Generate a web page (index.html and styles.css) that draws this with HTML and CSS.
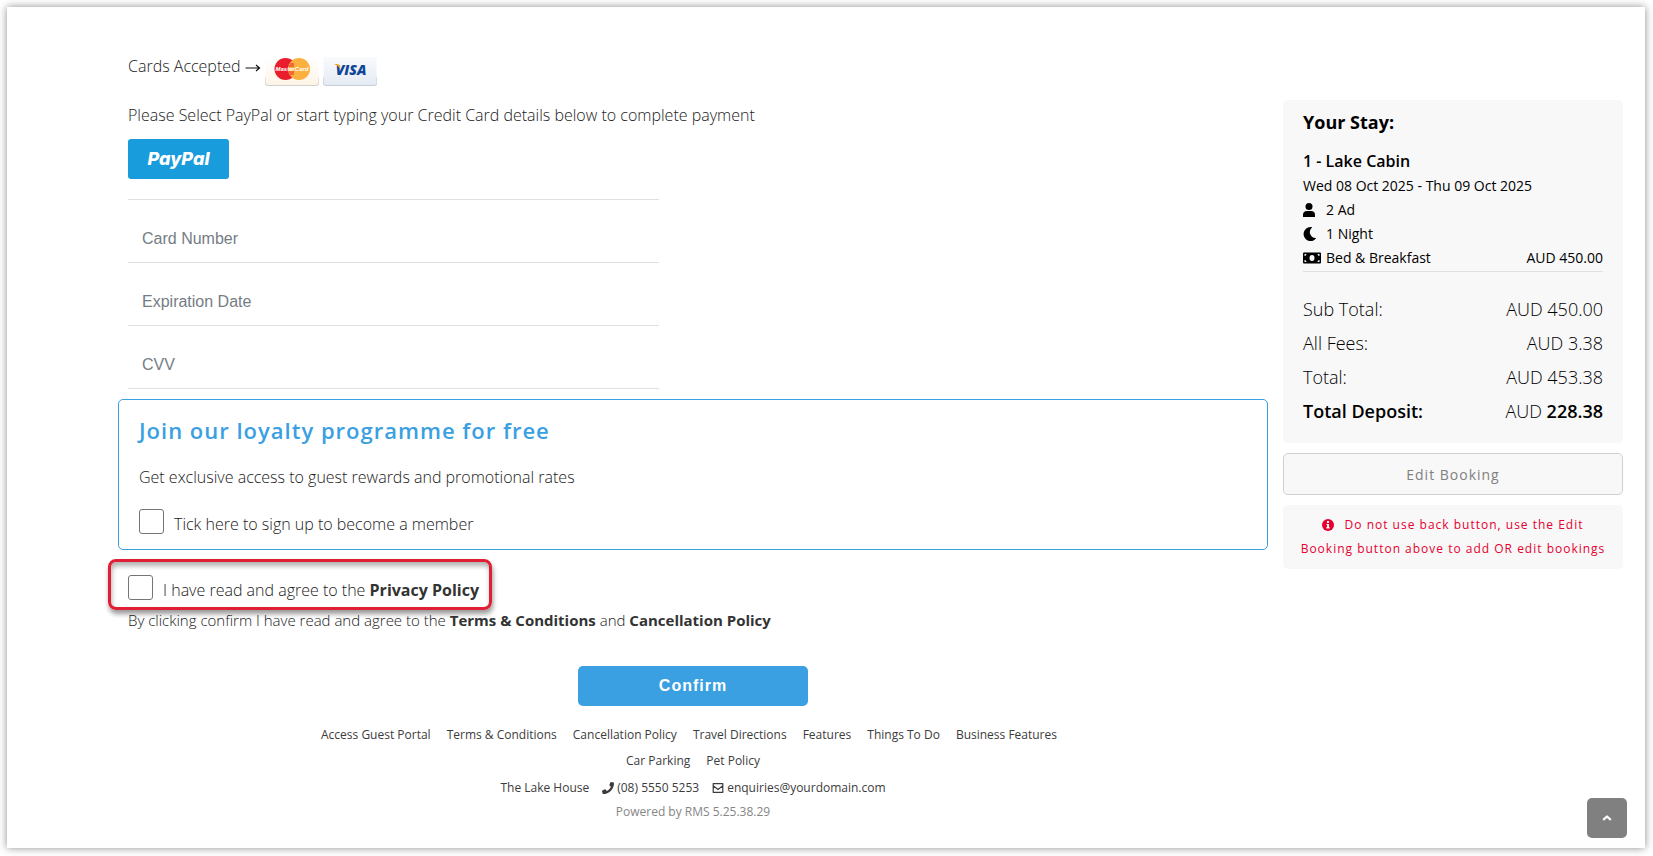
FILE: index.html
```html
<!DOCTYPE html>
<html lang="en">
<head>
    <meta charset="UTF-8">
    <meta name="viewport" content="width=device-width, initial-scale=1.0">
    <title>The Lake House - Payment</title>
    <link rel="stylesheet" href="styles.css">
</head>
<body>
    <div class="page">
        <main class="content">
            <form class="payment-form">
                <div class="cards-accepted">
                    <span>Cards Accepted</span>
                    <svg class="arrow" width="16" height="10" viewBox="0 0 16 10"><path d="M0.5 5H14.5M11 2L14.5 5L11 8" fill="none" stroke="#111" stroke-width="1.2"/></svg>
                    <svg class="card-logo" width="54" height="29" viewBox="0 0 54 29" role="img" aria-label="MasterCard">
                        <defs>
                            <linearGradient id="mc" x1="0" y1="0" x2="0" y2="1"><stop offset="0" stop-color="#fff"/><stop offset="1" stop-color="#fdf4e6"/></linearGradient>
                        </defs>
                        <path d="M0 20V26Q0 29 3 29H51Q54 29 54 26V20Z" fill="#d3d0cc"/>
                        <path d="M0.5 0H53.5V25Q53.5 28 51 28H3Q0.5 28 0.5 25Z" fill="url(#mc)"/>
                        <circle cx="20.500" cy="12" r="11" fill="#ea1d2c"/>
                        <circle cx="34" cy="12" r="11" fill="#fbb040"/>
                        <path d="M25 7H29M24 9H29M24 15H29M25 17H29" stroke="#ea1d2c"/>
                        <text class="mc-text" x="27" y="14" text-anchor="middle">MasterCard</text>
                    </svg>
                    <svg class="card-logo" width="54" height="29" viewBox="0 0 54 29" role="img" aria-label="Visa">
                        <defs>
                            <linearGradient id="visa" x1="0" y1="0" x2="0" y2="1"><stop offset="0" stop-color="#f9fafc"/><stop offset="1" stop-color="#e5ebf4"/></linearGradient>
                        </defs>
                        <path d="M0 20V26Q0 29 3 29H51Q54 29 54 26V20Z" fill="#c6ccd6"/>
                        <path d="M0.5 0H53.5V25Q53.5 28 51 28H3Q0.5 28 0.5 25Z" fill="url(#visa)"/>
                        <text class="visa-text" x="28" y="18" text-anchor="middle">VISA</text>
                        <path d="M11 7H15Q16 7 16.400 8.500L17.500 12Q15 8.500 11 7Z" fill="#f7a823"/>
                    </svg>
                </div>

                <p class="text">Please Select PayPal or start typing your Credit Card details below to complete payment</p>
                <button type="button" class="paypal-btn">PayPal</button>

                <div class="card-fields">
                    <input type="text" aria-label="Card Number" placeholder="Card Number">
                    <input type="text" aria-label="Expiration Date" placeholder="Expiration Date">
                    <input type="text" aria-label="CVV" placeholder="CVV">
                </div>

                <section class="loyalty">
                    <h2>Join our loyalty programme for free</h2>
                    <p class="text">Get exclusive access to guest rewards and promotional rates</p>
                    <div class="check-row">
                        <input type="checkbox" id="member">
                        <label for="member">Tick here to sign up to become a member</label>
                    </div>
                </section>

                <div class="check-row privacy">
                    <input type="checkbox" id="privacy">
                    <label for="privacy">I have read and agree to the <a href="#">Privacy Policy</a></label>
                </div>
                <p class="text terms">By clicking confirm I have read and agree to the <a href="#">Terms &amp; Conditions</a> and <a href="#">Cancellation Policy</a></p>

                <button type="submit" class="confirm-btn">Confirm</button>
            </form>

            <footer class="footer">
                <nav class="footer-links">
                    <a href="#">Access Guest Portal</a>
                    <a href="#">Terms &amp; Conditions</a>
                    <a href="#">Cancellation Policy</a>
                    <a href="#">Travel Directions</a>
                    <a href="#">Features</a>
                    <a href="#">Things To Do</a>
                    <a href="#">Business Features</a>
                    <a href="#">Car Parking</a>
                    <a href="#">Pet Policy</a>
                </nav>
                <div class="contact">
                    <span>The Lake House</span>
                    <a href="#"><svg width="12" height="12" viewBox="0 0 512 512"><path fill="currentColor" d="M493 24.600l-104-24c-11.300-2.600-22.900 3.300-27.500 13.900l-48 112c-4.200 9.800-1.400 21.300 6.900 28l60.600 49.600c-36 76.700-98.900 140.500-177.200 177.200l-49.600-60.600c-6.800-8.300-18.200-11.100-28-6.900l-112 48C3.900 366.500-2 378.100.6 389.400l24 104C27.100 504.200 36.700 512 48 512c256.100 0 464-207.500 464-464 0-11.200-7.700-20.900-19-23.400z"/></svg>(08) 5550 5253</a>
                    <a href="#"><svg width="12" height="12" viewBox="0 0 12 12"><path d="M1.200 1.700H10.800V10.300H1.200ZM1.200 3.700L6 7.500L10.800 3.700" fill="none" stroke="currentColor" stroke-width="1.200" stroke-linejoin="round"/></svg>enquiries@yourdomain.com</a>
                </div>
                <div class="powered">Powered by RMS 5.25.38.29</div>
            </footer>
        </main>

        <aside class="sidebar">
            <section class="summary">
                <h3>Your Stay:</h3>
                <h4>1 - Lake Cabin</h4>
                <div class="stay-row">Wed 08 Oct 2025 - Thu 09 Oct 2025</div>
                <div class="stay-row">
                    <svg width="18" height="14" viewBox="0 0 18 14"><circle cx="6" cy="3.500" r="3.500"/><path d="M0 14V12Q0 8 4 8H8Q12 8 12 12V14Z"/></svg>
                    <span>2 Ad</span>
                </div>
                <div class="stay-row">
                    <svg width="18" height="14" viewBox="0 0 18 14"><path d="M8.500 0.100A7 7 0 1 0 12.900 11.600A0.300 0.300 0 0 0 12.600 11.100A6 6 0 0 1 8.700 0.800A0.300 0.300 0 0 0 8.500 0.100Z"/></svg>
                    <span>1 Night</span>
                </div>
                <div class="stay-row rate">
                    <svg width="18" height="14" viewBox="0 0 18 14"><path fill-rule="evenodd" d="M1 1.500H17Q18 1.500 18 2.500V11.500Q18 12.500 17 12.500H1Q0 12.500 0 11.500V2.500Q0 1.500 1 1.500ZM1.500 3V5A2 2 0 0 0 3.500 3ZM16.500 3H14.500A2 2 0 0 0 16.500 5ZM1.500 11H3.500A2 2 0 0 0 1.500 9ZM16.500 11V9A2 2 0 0 0 14.500 11ZM9 4A2.500 3 0 0 0 9 10A2.500 3 0 0 0 9 4Z"/></svg>
                    <span>Bed &amp; Breakfast</span>
                    <span class="amount">AUD 450.00</span>
                </div>
                <dl class="totals">
                    <dt>Sub Total:</dt><dd>AUD 450.00</dd>
                    <dt>All Fees:</dt><dd>AUD 3.38</dd>
                    <dt>Total:</dt><dd>AUD 453.38</dd>
                    <dt class="deposit">Total Deposit:</dt><dd>AUD <b>228.38</b></dd>
                </dl>
            </section>
            <button type="button" class="edit-btn">Edit Booking</button>
            <p class="notice">
                <svg width="12" height="12" viewBox="0 0 12 12"><circle cx="6" cy="6" r="6" fill="currentColor"/><path d="M5 2H7V4H5ZM4.500 5H7V8.300H7.700V9.500H4.300V8.300H5.100V6.100H4.500Z" fill="#fff"/></svg>
                Do not use back button, use the Edit Booking button above to add OR edit bookings
            </p>
        </aside>
    </div>

    <button type="button" class="scroll-top" aria-label="Back to top">
        <svg width="10" height="6" viewBox="0 0 10 6"><path d="M1.200 4.800L5 1.500L8.800 4.800" fill="none" stroke="#fff" stroke-width="2.200" stroke-linejoin="round"/></svg>
    </button>
</body>
</html>
```
FILE: styles.css
```css
* {
    box-sizing: border-box;
}

body {
    margin: 0;
    padding: 7px 8px 8px 7px;
    font-family: "Open Sans", sans-serif;
    font-size: 16px;
    font-weight: 300;
    line-height: 24px;
    color: #212121;
    background-color: #fff;
}

h2, h3, h4, p, dl, dd {
    margin: 0;
}

a {
    color: inherit;
    text-decoration: none;
}

button {
    font-family: inherit;
    border: none;
    cursor: pointer;
}

.page {
    display: flex;
    align-items: flex-start;
    gap: 15px;
    min-height: calc(100vh - 15px);
    padding: 0 22px 0 111px;
    background-color: #fff;
    box-shadow: 0 0 8px rgba(0, 0, 0, 0.45);
}

.content {
    flex: 1;
    padding-top: 47px;
}

.payment-form {
    display: flex;
    flex-direction: column;
    align-items: flex-start;
    padding: 0 10px;
}

/* accepted cards */
.cards-accepted {
    display: flex;
    align-items: flex-start;
    gap: 4px;
    margin-bottom: 17px;
}

.arrow {
    margin-top: 9px;
}

.card-logo {
    margin-top: 3px;
}

.mc-text {
    font: italic bold 6px "Liberation Sans", sans-serif;
    fill: #fff;
}

.visa-text {
    font: italic 800 14px "Open Sans", sans-serif;
    fill: #0f4595;
}

.paypal-btn {
    width: 101px;
    height: 40px;
    margin: 12px 0 20px;
    padding: 0 0 2px;
    border-radius: 3px;
    background-color: #199cdc;
    color: #fff;
    font-family: Inter, sans-serif;
    font-size: 18px;
    font-weight: 800;
    font-style: italic;
}

.card-fields {
    width: 47%;
    border-top: 1px solid #e0e0e0;
}

.card-fields input {
    display: block;
    width: 100%;
    height: 63px;
    padding: 16px 14px 0;
    border: none;
    border-bottom: 1px solid #e0e0e0;
    background: none;
    font-family: "Liberation Sans", Arial, sans-serif;
    font-size: 16px;
    outline: none;
}

.card-fields input::placeholder {
    color: #757d84;
    opacity: 1;
}

/* loyalty box */
.loyalty {
    align-self: stretch;
    margin: 10px -10px 9px;
    padding: 15px 20px 13px;
    border: 1px solid #3aa0e2;
    border-radius: 5px;
}

.loyalty h2 {
    margin-bottom: 20px;
    font-size: 22px;
    font-weight: 600;
    line-height: 30px;
    letter-spacing: 1px;
    color: #3aa0e2;
}

.loyalty .check-row {
    margin-top: 20px;
}

.check-row {
    display: flex;
    gap: 10px;
}

.check-row input {
    width: 25px;
    height: 25px;
    margin: 0;
    border: 1px solid #757575;
    border-radius: 3px;
    background-color: #fff;
    appearance: none;
}

.check-row input:checked {
    background-color: #3aa0e2;
}

.check-row label {
    padding-top: 3px;
}

.check-row a, .terms a {
    font-weight: 700;
    color: #333;
}

.privacy {
    margin-left: -20px;
    padding: 13px 10px 5px 17px;
    border: 3px solid #e01f35;
    border-radius: 8px;
    box-shadow: 1px 4px 5px rgba(0, 0, 0, 0.4), inset 1px 4px 5px rgba(0, 0, 0, 0.3);
}

.terms {
    margin-bottom: 36px;
    font-size: 15px;
    line-height: 20px;
}

.confirm-btn {
    align-self: center;
    width: 230px;
    height: 40px;
    border-radius: 5px;
    background-color: #3aa0e2;
    color: #fff;
    font-family: "Liberation Sans", Arial, sans-serif;
    font-size: 16px;
    font-weight: 700;
    letter-spacing: 1px;
}

/* footer */
.footer {
    margin-top: 16px;
    font-size: 12px;
    font-weight: 400;
    line-height: 26px;
    text-align: center;
    color: #3c3c3c;
}

.footer-links {
    display: flex;
    flex-wrap: wrap;
    justify-content: center;
    width: 66%;
    margin: 0 auto 1px;
}

.footer-links a {
    margin-right: 8px;
}

.footer-links a + a {
    margin-left: 8px;
}

.contact {
    display: flex;
    justify-content: center;
    gap: 13px;
}

.contact svg {
    margin-right: 3px;
    vertical-align: -2px;
}

.powered {
    line-height: 22px;
    color: #868686;
}

/* sidebar */
.sidebar {
    width: 340px;
    padding-top: 93px;
    color: #000;
}

.summary {
    padding: 10px 20px 15px;
    border-radius: 5px;
    background-color: #f8f8f8;
}

.summary h3 {
    margin-bottom: 15px;
    font-size: 18px;
    font-weight: 700;
}

.summary h4 {
    margin-bottom: 1px;
    font-size: 16px;
    font-weight: 600;
}

.stay-row {
    display: flex;
    align-items: center;
    gap: 5px;
    font-size: 14px;
    font-weight: 400;
}

.rate {
    padding-bottom: 1px;
    border-bottom: 1px solid #e0e0e0;
}

.amount {
    margin-left: auto;
}

.totals {
    display: grid;
    grid-template-columns: auto auto;
    justify-content: space-between;
    margin-top: 20px;
    font-size: 18px;
    line-height: 34px;
}

.totals dd {
    text-align: right;
}

.totals .deposit, .totals b {
    font-weight: 600;
}

.edit-btn {
    display: block;
    width: 100%;
    height: 42px;
    margin: 10px 0;
    border: 1px solid #cfcfcf;
    border-radius: 5px;
    background-color: #f8f8f8;
    color: #808080;
    font-size: 14px;
    letter-spacing: 1px;
}

.notice {
    padding: 8px 15px;
    border-radius: 5px;
    background-color: #f8f8f8;
    color: #e4002f;
    font-size: 12px;
    font-weight: 400;
    letter-spacing: 1px;
    text-align: center;
}

.notice svg {
    margin-right: 6px;
    vertical-align: -2px;
}

.scroll-top {
    position: fixed;
    right: 26px;
    bottom: 18px;
    display: flex;
    align-items: center;
    justify-content: center;
    width: 40px;
    height: 40px;
    border-radius: 5px;
    background-color: #808080;
}
```
